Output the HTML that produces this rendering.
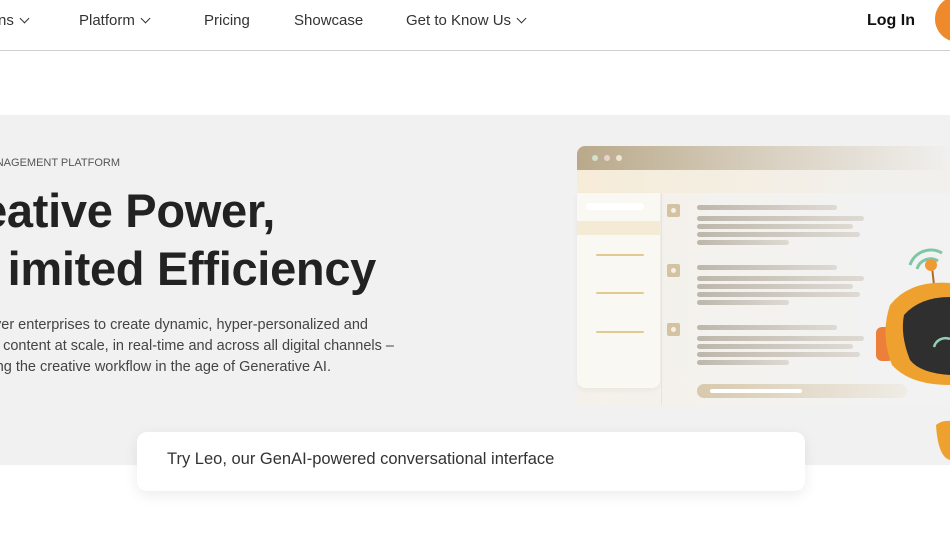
<!DOCTYPE html>
<html><head><style>
*{margin:0;padding:0;box-sizing:border-box}
body{width:950px;height:534px;overflow:hidden;background:#fff;font-family:"Liberation Sans",sans-serif;position:relative;color:#222}
.nav{position:absolute;top:0;left:0;width:950px;height:51px;border-bottom:1px solid #cfcfcf;background:#fff}
.nav span{position:absolute;top:12px;font-size:15px;color:#333;white-space:nowrap}
.chev{display:inline-block;width:7px;height:7px;border-right:1.8px solid #333;border-bottom:1.8px solid #333;transform:rotate(45deg);margin-left:7px;position:relative;top:-3px}
.band{position:absolute;top:115px;left:0;width:950px;height:350px;background:#f1f1f1}
.r{position:absolute;white-space:nowrap}
.h{font-weight:bold;font-size:47px;color:#222;letter-spacing:-0.3px}
.p{font-size:14.5px;color:#444}
.card{position:absolute;left:137px;top:432px;width:668px;height:59px;background:#fff;border-radius:10px;box-shadow:0 4px 14px rgba(0,0,0,.08);font-size:16.5px;color:#333;padding:18px 0 0 30px}
.win{position:absolute;left:577px;top:146px;width:373px;height:260px;background:linear-gradient(90deg,#f5f1ea,#f2f2f2 80%)}
.bar{position:absolute;height:5px;border-radius:3px;background:linear-gradient(90deg,#bdb6ab,#dedad3)}
.side{position:absolute;left:577px;top:193px;width:83px;height:195px;background:#faf8f3;border-radius:0 0 8px 8px;box-shadow:0 2px 6px rgba(0,0,0,.05)}
.sq{position:absolute;width:13px;height:13px;background:#d4c3a3;border-radius:2px}
.sq::after{content:"";position:absolute;left:4px;top:4px;width:5px;height:5px;border-radius:50%;background:#f5f0e5}
.gl{position:absolute;height:2px;background:#e2c992;border-radius:1px}
</style></head><body>
<div class="nav">
<span style="left:-2px">ns<i class="chev"></i></span>
<span style="left:79px">Platform<i class="chev"></i></span>
<span style="left:204px">Pricing</span>
<span style="left:294px">Showcase</span>
<span style="left:406px">Get to Know Us<i class="chev"></i></span>
<span style="left:867px;font-weight:bold;font-size:16px;color:#111;top:12px">Log In</span>
<div style="position:absolute;left:935px;top:-4px;width:46px;height:46px;border-radius:50%;background:#ef8a2c"></div>
</div>
<div class="band"></div>
<div class="r" style="right:830px;top:157px;font-size:11px;color:#555">ANAGEMENT PLATFORM</div>
<div class="r h" style="right:675px;top:183px">eative Power,</div>
<div class="r h" style="right:574px;top:241px">imited Efficiency</div>
<div class="r p" style="right:582px;top:317px">ver enterprises to create dynamic, hyper-personalized and</div>
<div class="r p" style="right:556px;top:338px">content at scale, in real-time and across all digital channels –</div>
<div class="r p" style="right:619px;top:359px">ng the creative workflow in the age of Generative AI.</div>

<div class="win"></div>
<div style="position:absolute;left:577px;top:146px;width:373px;height:24px;border-radius:8px 0 0 0;background:linear-gradient(90deg,#b9a98a,#d8cfbf 50%,#f1f0ee)"></div>
<div style="position:absolute;left:592px;top:155px;width:6px;height:6px;border-radius:50%;background:#cfe1cf"></div>
<div style="position:absolute;left:604px;top:155px;width:6px;height:6px;border-radius:50%;background:#e8d2d0"></div>
<div style="position:absolute;left:616px;top:155px;width:6px;height:6px;border-radius:50%;background:#ece5d5"></div>
<div style="position:absolute;left:577px;top:170px;width:373px;height:23px;background:linear-gradient(90deg,#f6ecd8,#f2f0ec 80%)"></div>
<div class="side"></div>
<div style="position:absolute;left:586px;top:203px;width:58px;height:7px;border-radius:4px;background:#fff"></div>
<div style="position:absolute;left:577px;top:221px;width:83px;height:14px;background:#f5ead3"></div>
<div class="gl" style="left:596px;top:254px;width:48px"></div>
<div class="gl" style="left:596px;top:292px;width:48px"></div>
<div class="gl" style="left:596px;top:331px;width:48px"></div>
<div style="position:absolute;left:661px;top:193px;width:1px;height:212px;background:#e6e3de"></div>
<div class="sq" style="left:667px;top:204px"></div>
<div class="sq" style="left:667px;top:264px"></div>
<div class="sq" style="left:667px;top:323px"></div>
<div class="bar" style="left:697px;top:205px;width:140px"></div>
<div class="bar" style="left:697px;top:216px;width:167px"></div>
<div class="bar" style="left:697px;top:224px;width:156px"></div>
<div class="bar" style="left:697px;top:232px;width:163px"></div>
<div class="bar" style="left:697px;top:240px;width:92px"></div>
<div class="bar" style="left:697px;top:265px;width:140px"></div>
<div class="bar" style="left:697px;top:276px;width:167px"></div>
<div class="bar" style="left:697px;top:284px;width:156px"></div>
<div class="bar" style="left:697px;top:292px;width:163px"></div>
<div class="bar" style="left:697px;top:300px;width:92px"></div>
<div class="bar" style="left:697px;top:325px;width:140px"></div>
<div class="bar" style="left:697px;top:336px;width:167px"></div>
<div class="bar" style="left:697px;top:344px;width:156px"></div>
<div class="bar" style="left:697px;top:352px;width:163px"></div>
<div class="bar" style="left:697px;top:360px;width:92px"></div>
<div style="position:absolute;left:697px;top:384px;width:210px;height:14px;border-radius:7px;background:linear-gradient(90deg,#d8c9ad,#efece6)"></div>
<div style="position:absolute;left:710px;top:389px;width:92px;height:4px;border-radius:2px;background:#fff"></div>

<svg style="position:absolute;left:870px;top:235px" width="80" height="230" viewBox="0 0 80 230">
<path d="M40 30 A22 22 0 0 1 72 18" stroke="#7cc7a5" stroke-width="3" fill="none"/>
<path d="M47 34 A14 14 0 0 1 68 26" stroke="#7cc7a5" stroke-width="3" fill="none"/>
<line x1="62" y1="32" x2="64" y2="50" stroke="#b06b20" stroke-width="2"/>
<circle cx="61" cy="30" r="6" fill="#f09a35"/>
<rect x="6" y="92" width="18" height="34" rx="6" fill="#ec7f3a"/>
<path d="M20 70 Q40 45 80 48 L80 150 Q40 150 22 130 Q10 100 20 70Z" fill="#eea12e"/>
<path d="M34 80 Q50 62 80 62 L80 140 Q50 138 40 125 Q30 100 34 80Z" fill="#2f2f2f"/>
<path d="M64 112 A12 12 0 0 1 80 104" stroke="#8fd3b2" stroke-width="2.5" fill="none"/>
<path d="M66 190 Q72 185 80 186 L80 225 Q68 222 66 190Z" fill="#eea12e"/>
</svg>

<div class="card">Try Leo, our GenAI-powered conversational interface</div>
</body></html>
